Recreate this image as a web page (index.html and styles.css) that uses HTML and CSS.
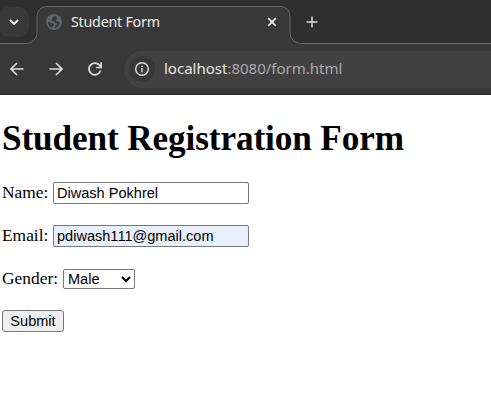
FILE: index.html
```html
<!DOCTYPE html>
<html lang="en">
<head>
<meta charset="utf-8">
<title>Student Form</title>
<link rel="stylesheet" href="styles.css">
</head>
<body>
<header class="browser">
  <div class="tabstrip">
    <svg class="tab-shape" width="491" height="44" viewBox="0 0 491 44" fill="none"><path d="M0 44V43.5H25C32 43.5 37 39 37 32V17C37 10.500 41 6.500 48 6.500H280C286 6.500 290 10.500 290 17V32C290 39 295 43.500 302 43.500H491V44Z" fill="#383838"/><path d="M0 43.500H25C32 43.500 37 39 37 32V17C37 10.500 41 6.500 48 6.500H280C286 6.500 290 10.500 290 17V32C290 39 295 43.500 302 43.500H491" stroke="#686868"/></svg>
    <div class="tab-search"><svg width="10" height="6" viewBox="0 0 10 6"><path d="M1 1L5 5L9 1" fill="none" stroke="#eee" stroke-width="2"/></svg></div>
    <div class="tab">
      <svg width="16" height="16" viewBox="0 0 16 16"><circle cx="8" cy="8" r="8" fill="#5f6468"/><path d="M8 2C7 4 5.500 4.500 5.800 6C6.100 7.300 8 6.500 8.500 8C9 9.500 10.500 8.500 11 9.500C11.500 10.500 9.800 11 9.500 12C9.200 13 8.500 13.700 8 14A6 6 0 0 0 14 8C13 8.300 12.500 7.500 11.500 7.500C10 7.500 9.800 6 10.500 5.300C11 4.700 11.300 4 11 3A6 6 0 0 0 8 2ZM2 8A6 6 0 0 0 5.500 13.400C5.500 12.400 6.200 12.300 7.300 12.200C8.500 12 8.200 10 7.200 9.500C6 9 5 9.500 4.500 8.700C4 8 3 8 2 8Z" fill="#383838"/></svg>
      <span class="tab-title">Student Form</span>
      <svg class="close" width="10" height="10" viewBox="0 0 10 10"><path d="M1.200 1.200L8.800 8.800M8.800 1.200L1.200 8.800" stroke="#eee" stroke-width="1.700"/></svg>
    </div>
    <svg class="new-tab" width="12" height="12" viewBox="0 0 12 12"><path d="M6 .5V11.500M.5 6H11.500" stroke="#ddd" stroke-width="1.500"/></svg>
  </div>
  <nav class="toolbar">
    <svg class="back" width="14" height="14" viewBox="0 0 14 14"><path d="M13.500 7H1.500M7 1L1 7L7 13" fill="none" stroke="#ddd" stroke-width="1.600"/></svg>
    <svg class="forward" width="14" height="14" viewBox="0 0 14 14"><path d="M.5 7H12.500M7 1L13 7L7 13" fill="none" stroke="#ddd" stroke-width="1.600"/></svg>
    <svg class="reload" width="14" height="14" viewBox="0 0 14 14"><path d="M12.600 8.500A5.900 5.900 0 1 1 11.300 3L13 5M13.100 .3V5.500H8" fill="none" stroke="#ddd" stroke-width="1.700"/></svg>
    <div class="omnibox">
      <div class="site-info"><svg width="14" height="14" viewBox="0 0 14 14"><circle cx="7" cy="7" r="6.300" fill="none" stroke="#ddd" stroke-width="1.400"/><path d="M7 6V10.500M7 3.500V5" stroke="#ddd" stroke-width="1.400"/></svg></div>
      <div class="url"><span class="host">localhost</span>:8080/form.html</div>
    </div>
  </nav>
</header>
<main class="page">
  <h1>Student Registration Form</h1>
  <form>
    <div class="row name-row"><label for="name">Name:</label><input id="name" type="text" value="Diwash Pokhrel"></div>
    <div class="row email-row"><label for="email">Email:</label><input id="email" class="autofilled" type="text" value="pdiwash111@gmail.com"></div>
    <div class="row gender-row"><label for="gender">Gender:</label><select id="gender"><option>Male</option><option>Female</option></select></div>
    <button type="button">Submit</button>
  </form>
</main>
</body>
</html>
```
FILE: styles.css
```css
* { box-sizing: border-box; }
body { margin: 0; background: #fff; color: #000; overflow: hidden; font: 17.6px "Liberation Serif", serif; }
svg { display: block; flex: none; }
.browser { height: 95px; background: #383838; border-bottom: 1px solid #2b282a; font-family: "Noto Sans", sans-serif; }
.tabstrip { position: relative; display: flex; height: 44px; background: #2f2f2f; }
.tab-shape { position: absolute; left: 0; top: 0; }
.tab-search { position: relative; display: flex; align-items: center; width: 29px; height: 30px; margin-top: 7px; padding-left: 9px; background: #383838; border-radius: 8px 10px 10px 8px; }
.tab { position: relative; display: flex; align-items: center; width: 261px; height: 30px; margin-top: 7px; padding: 0 13px 0 17px; }
.tab-title { margin: 0 0 1px 9px; color: #eee; font: 14.3px "Noto Sans", sans-serif; letter-spacing: -0.25px; white-space: nowrap; }
.close { margin-left: auto; }
.new-tab { position: relative; margin: 16px 0 0 16px; }
.toolbar { display: flex; align-items: center; height: 50px; }
.back { margin-left: 10px; }
.forward { margin-left: 25px; }
.reload { margin-left: 25px; }
.omnibox { display: flex; align-items: center; flex: 1; height: 37px; margin-left: 22px; padding-left: 5px; background: #414141; border-radius: 19px 0 0 19px; }
.site-info { display: flex; align-items: center; justify-content: center; width: 26px; height: 26px; border-radius: 50%; background: #383838; }
.url { margin: 0 0 2px 9px; color: #aaa; font: 15px/26px "Noto Sans", sans-serif; white-space: nowrap; }
.host { color: #e8e8e8; }
.page { padding: 24px 2px 0; }
h1 { height: 40px; margin: 0; font-size: 35.2px; line-height: 40px; letter-spacing: -0.11px; white-space: nowrap; }
form { padding-top: 23px; }
.row { display: flex; align-items: center; height: 22px; margin-bottom: 21px; }
label { height: 22px; font-size: 17.4px; line-height: 20px; }
input, select, button { margin: 0; border: 1px solid #767676; border-radius: 2px; color: #000; font: 14.55px "Liberation Sans", sans-serif; }
input { width: 196px; height: 22px; padding: 1px 3px; background: #fff; }
.name-row label, .email-row label { width: 51px; }
.gender-row label { width: 61px; }
.autofilled { background: #e8f0fe; }
.gender-row { margin-bottom: 20px; }
select { width: 72px; height: 20px; padding: 0; background: #fff; }
button { display: block; width: 62px; height: 22px; padding: 0; background: #efefef; border-radius: 3px; }
```
